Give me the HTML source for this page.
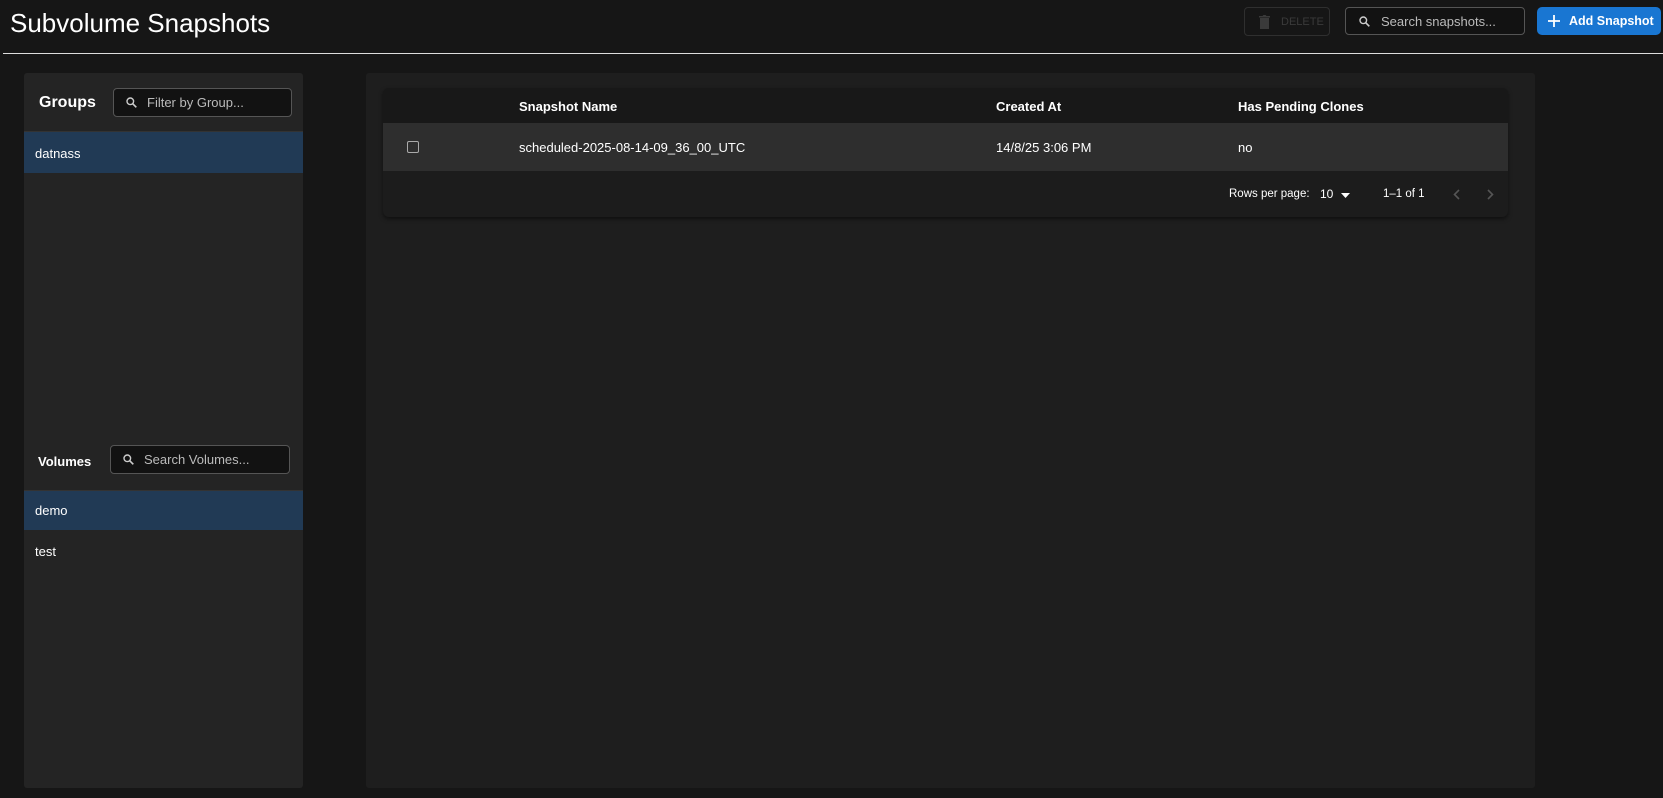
<!DOCTYPE html>
<html><head><meta charset="utf-8"><style>
*{box-sizing:border-box;margin:0;padding:0}
body{width:1663px;height:798px;background:#161616;font-family:"Liberation Sans",sans-serif;color:#fff;position:relative;overflow:hidden;font-size:13px;white-space:nowrap}
.a{position:absolute}
.title{left:10px;top:6px;font-size:26px;line-height:34px}
.line{left:3px;right:0;top:53px;height:1px;background:#ddd}
.btn-del{left:1244px;top:7px;width:86px;height:29px;border:1px solid #2f2f2f;border-radius:4px;color:#3a3a3a;font-size:11px;display:flex;align-items:center;padding-left:36px}
.inp{border:1px solid #555;border-radius:4px;background:#121212;color:#bbb;font-size:13px;display:flex;align-items:center}
.add{left:1537px;top:7px;width:124px;height:28px;background:#1976d2;border-radius:5px;font-weight:bold;font-size:12.5px;display:flex;align-items:center;padding-left:32px}
.panel{background:#242424;border-radius:3px}
.main{background:#1e1e1e;border-radius:3px}
.sel{background:#213a55}
.hd{font-weight:bold}
</style></head><body>
<div class="a title">Subvolume Snapshots</div>
<div class="a line"></div>
<div class="a btn-del"><svg class="a" style="left:14px;top:7px" width="11" height="14" viewBox="0 0 11 14"><path d="M1 3h9v11H1zM0 1h3.5l1-1h2l1 1H11v1.5H0z" fill="#3a3a3a"/></svg>DELETE</div>
<div class="a inp" style="left:1345px;top:7px;width:180px;height:28px;padding-left:35px"><svg class="a" style="left:13px;top:8px" width="11" height="11" viewBox="0 0 11 11"><circle cx="4.3" cy="4.3" r="3.3" stroke="#ccc" stroke-width="1.4" fill="none"/><path d="M6.8 6.8l3.5 3.5" stroke="#ccc" stroke-width="1.6"/></svg>Search snapshots...</div>
<div class="a add"><svg class="a" style="left:11px;top:8px" width="12" height="12"><path d="M6 0v12M0 6h12" stroke="#fff" stroke-width="1.8"/></svg>Add Snapshot</div>

<div class="a panel" style="left:24px;top:73px;width:279px;height:715px"></div>
<div class="a hd" style="left:39px;top:94px;font-size:16px">Groups</div>
<div class="a inp" style="left:113px;top:88px;width:179px;height:29px;padding-left:33px"><svg class="a" style="left:12px;top:8px" width="11" height="11" viewBox="0 0 11 11"><circle cx="4.3" cy="4.3" r="3.3" stroke="#ccc" stroke-width="1.4" fill="none"/><path d="M6.8 6.8l3.5 3.5" stroke="#ccc" stroke-width="1.6"/></svg>Filter by Group...</div>
<div class="a sel" style="left:24px;top:131px;width:279px;height:42px;border-top:1px solid #333;padding:14px 0 0 11px">datnass</div>
<div class="a hd" style="left:38px;top:454px;font-size:13px">Volumes</div>
<div class="a inp" style="left:110px;top:445px;width:180px;height:29px;padding-left:33px"><svg class="a" style="left:12px;top:8px" width="11" height="11" viewBox="0 0 11 11"><circle cx="4.3" cy="4.3" r="3.3" stroke="#ccc" stroke-width="1.4" fill="none"/><path d="M6.8 6.8l3.5 3.5" stroke="#ccc" stroke-width="1.6"/></svg>Search Volumes...</div>
<div class="a sel" style="left:24px;top:490px;width:279px;height:40px;border-top:1px solid #333;padding:12px 0 0 11px">demo</div>
<div class="a" style="left:35px;top:544px">test</div>

<div class="a main" style="left:366px;top:73px;width:1169px;height:715px"></div>
<div class="a" style="left:383px;top:88px;width:1125px;height:129px;background:#1c1c1c;border-radius:6px;overflow:hidden;box-shadow:0 2px 4px rgba(0,0,0,.5)">
 <div class="a" style="left:0;top:0;width:100%;height:35px;background:#181818"></div>
 <div class="a hd" style="left:136px;top:11px">Snapshot Name</div>
 <div class="a hd" style="left:613px;top:11px">Created At</div>
 <div class="a hd" style="left:855px;top:11px">Has Pending Clones</div>
 <div class="a" style="left:0;top:35px;width:100%;height:48px;background:#2e2e2e"></div>
 <div class="a" style="left:24px;top:53px;width:12px;height:12px;border:1.5px solid #aaa;border-radius:2px"></div>
 <div class="a" style="left:136px;top:52px">scheduled-2025-08-14-09_36_00_UTC</div>
 <div class="a" style="left:613px;top:52px">14/8/25 3:06 PM</div>
 <div class="a" style="left:855px;top:52px">no</div>
 <div class="a" style="left:846px;top:100px;font-size:11.5px">Rows per page:</div>
 <div class="a" style="left:937px;top:99px;font-size:12px">10</div>
 <svg class="a" style="left:958px;top:105px" width="9" height="5"><path d="M0 0h9L4.5 5z" fill="#fff"/></svg>
 <div class="a" style="left:1000px;top:100px;font-size:11.5px">1–1 of 1</div>
 <svg class="a" style="left:1070px;top:101px" width="7" height="11"><path d="M6 1L1.5 5.5 6 10" stroke="#555" stroke-width="1.6" fill="none"/></svg>
 <svg class="a" style="left:1104px;top:101px" width="7" height="11"><path d="M1 1l4.5 4.5L1 10" stroke="#555" stroke-width="1.6" fill="none"/></svg>
</div>
</body></html>
